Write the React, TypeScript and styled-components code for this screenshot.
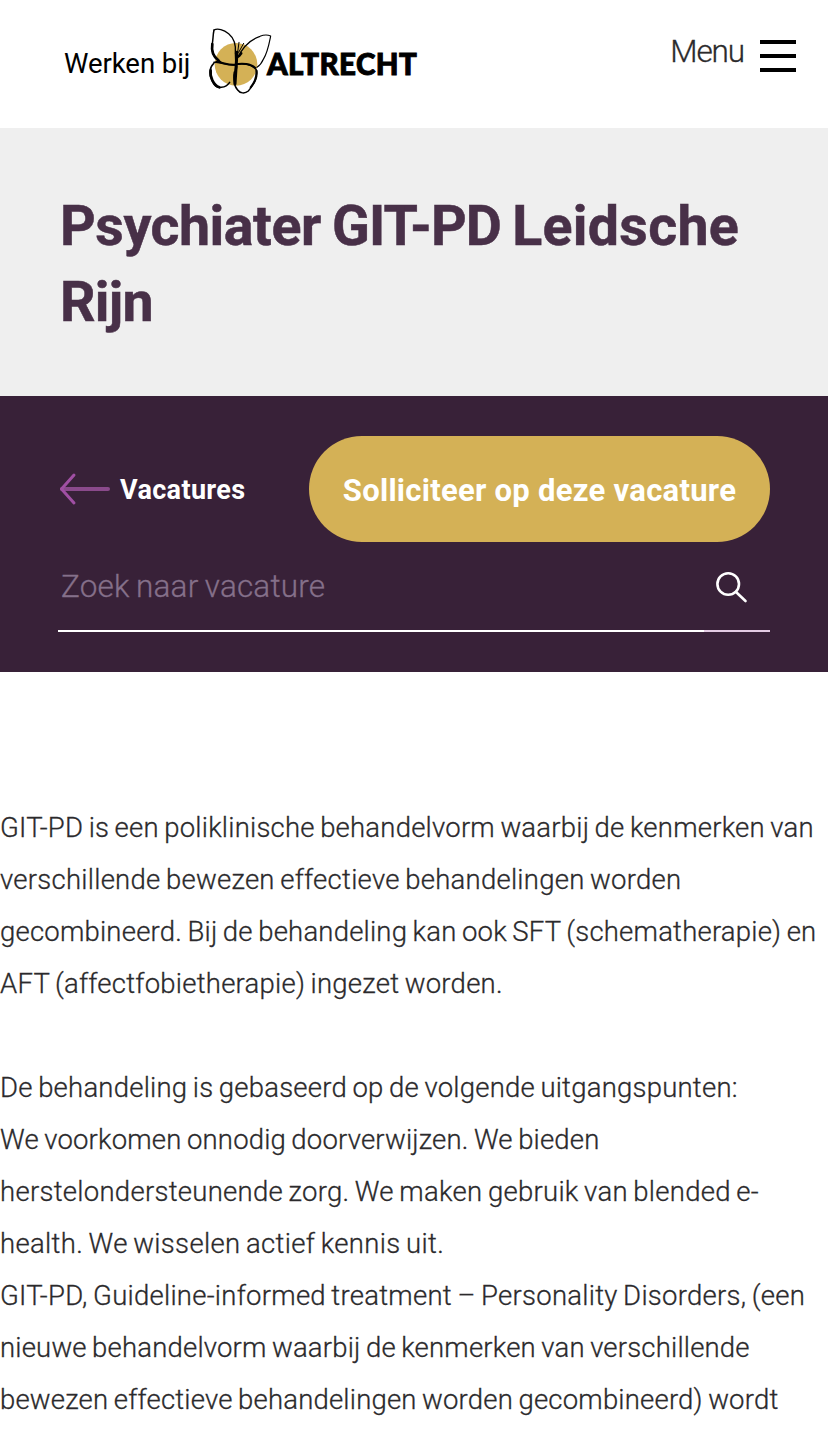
import React from "react";
import styled, { createGlobalStyle } from "styled-components";

const GlobalStyle = createGlobalStyle`
  *, *::before, *::after { box-sizing: border-box; }
  html { overflow: hidden; }
  body {
    margin: 0;
    height: 1430px;
    overflow: hidden;
    background: #fff;
    color: #2b2a2c;
    font-family: Roboto, "Liberation Sans", sans-serif;
  }
`;

const Header = styled.header`
  display: flex;
  align-items: flex-start;
  justify-content: space-between;
  height: 128px;
  padding: 0 32px 0 64px;
`;

const Brand = styled.a`
  display: flex;
  align-items: flex-start;
  color: #000;
  text-decoration: none;
`;

const BrandPrefix = styled.span`
  width: 141px;
  padding-top: 47px;
  font-size: 27.5px;
  font-weight: 400;
  line-height: 34px;
  letter-spacing: -0.05px;
  white-space: nowrap;
`;

const Butterfly = styled.svg`
  display: block;
  width: 70px;
  height: 78px;
  margin-top: 22px;
`;

const BrandName = styled.span`
  margin: 47px 0 0 -8px;
  font-family: Lato, sans-serif;
  font-size: 29.5px;
  font-weight: 900;
  line-height: 34px;
  letter-spacing: 0.4px;
  -webkit-text-stroke: 0.9px #000;
`;

const MenuButton = styled.button`
  display: flex;
  align-items: flex-start;
  gap: 16px;
  padding: 0;
  border: 0;
  background: none;
  color: #2b2a2c;
  font-family: inherit;
`;

const MenuLabel = styled.span`
  padding-top: 33px;
  font-size: 31.5px;
  font-weight: 300;
  line-height: 38px;
  letter-spacing: -1.1px;
  -webkit-text-stroke: 0.3px currentColor;
`;

const Bars = styled.span`
  display: flex;
  flex-direction: column;
  justify-content: space-between;
  width: 36px;
  height: 32px;
  margin-top: 40px;
`;

const Bar = styled.span`
  height: 4px;
  background: #000;
`;

const Hero = styled.section`
  height: 268px;
  padding: 61px 60px 0;
  background: #efefef;
`;

const Title = styled.h1`
  margin: 0;
  color: #483048;
  font-size: 55.5px;
  font-weight: 700;
  line-height: 76px;
  word-spacing: -2.6px;
  -webkit-text-stroke: 0.5px currentColor;
`;

const Word = styled.span<{ $track: number }>`
  letter-spacing: ${(p) => p.$track}px;
`;

const ActionBar = styled.section`
  height: 276px;
  padding: 40px 58px 0;
  background: #382138;
`;

const Actions = styled.div`
  display: flex;
  align-items: center;
  justify-content: space-between;
  height: 106px;
`;

const BackLink = styled.a`
  display: flex;
  align-items: center;
  gap: 9px;
  color: #fff;
  font-size: 27px;
  font-weight: 700;
  line-height: 36px;
  letter-spacing: 0.35px;
`;

const BackLabel = styled.span`
  padding-top: 2px;
`;

const ApplyButton = styled.button`
  width: 461px;
  height: 106px;
  padding: 2px 0 0;
  border: 0;
  border-radius: 53px;
  background: #d4b156;
  color: #fff;
  font-family: inherit;
  font-size: 31px;
  font-weight: 700;
  letter-spacing: 0.27px;
  white-space: nowrap;
`;

const SearchForm = styled.form`
  display: flex;
  height: 90px;
`;

const SearchInput = styled.input`
  width: 646px;
  height: 90px;
  padding: 1px 3px 0;
  border: 0;
  border-bottom: 2px solid #fff;
  outline: 0;
  background: none;
  color: #fff;
  font-family: inherit;
  font-size: 31.5px;
  font-weight: 300;
  letter-spacing: 0.18px;
  word-spacing: -1.5px;
  &::placeholder {
    color: #85708a;
    opacity: 1;
    -webkit-text-stroke: 0.3px #85708a;
  }
`;

const SearchButton = styled.button`
  flex: 1;
  display: flex;
  padding: 29px 0 0 11px;
  border: 0;
  border-bottom: 2px solid #e3cbe3;
  background: none;
`;

const Article = styled.main`
  padding-top: 130px;
`;

const Paragraph = styled.p`
  margin: 0 0 52px;
  font-size: 27.5px;
  font-weight: 300;
  line-height: 52px;
  word-spacing: -1.5px;
  -webkit-text-stroke: 0.3px currentColor;
`;

const Line = styled.span<{ $track?: number }>`
  display: block;
  white-space: nowrap;
  letter-spacing: ${(p) => p.$track ?? 0}px;
`;

const intro: [string, number][] = [
  ["GIT-PD is een poliklinische behandelvorm waarbij de kenmerken van", 0.22],
  ["verschillende bewezen effectieve behandelingen worden", 0.26],
  ["gecombineerd. Bij de behandeling kan ook SFT (schematherapie) en", 0.21],
  ["AFT (affectfobietherapie) ingezet worden.", 0.24],
];

const principles: [string, number][] = [
  ["De behandeling is gebaseerd op de volgende uitgangspunten:", 0.23],
  ["We voorkomen onnodig doorverwijzen. We bieden", 0.18],
  ["herstelondersteunende zorg. We maken gebruik van blended e-", 0.28],
  ["health. We wisselen actief kennis uit.", 0.33],
  ["GIT-PD, Guideline-informed treatment – Personality Disorders, (een", 0.26],
  ["nieuwe behandelvorm waarbij de kenmerken van verschillende", 0.19],
  ["bewezen effectieve behandelingen worden gecombineerd) wordt", 0.2],
];

const TextBlock = ({ lines }: { lines: [string, number][] }) => (
  <Paragraph>
    {lines.map(([text, track]) => (
      <Line key={text} $track={track}>{text}</Line>
    ))}
  </Paragraph>
);

export default function App() {
  return (
    <>
      <GlobalStyle />
      <Header>
        <Brand>
          <BrandPrefix>Werken bij</BrandPrefix>
          <Butterfly viewBox="0 0 210 234" aria-hidden="true">
            <circle cx="93" cy="127" r="64" fill="#d4b156" />
            <g fill="none" stroke="#000" strokeLinecap="round" strokeLinejoin="round">
              <path d="M27 24C38 18 56 23 71 35C88 49 93 71 91 93L92 119" strokeWidth="4" />
              <path d="M27 24C23 42 25 54 21 69C18 93 31 111 47 120" strokeWidth="4.5" />
              <path d="M22 66C18 91 28 106 40 115" strokeWidth="8" />
              <path d="M94 115C108 82 133 54 165 43C177 38 188 38 197 42C193 62 188 91 175 112C170 124 164 131 156 136" strokeWidth="3.5" />
              <path d="M27 121C50 120 69 132 91 128C114 121 143 127 155 145C160 171 143 190 130 207C119 216 105 214 98 204C86 192 85 167 88 150" strokeWidth="4.5" />
              <path d="M34 120C53 120 68 130 89 128C112 122 138 126 150 137" strokeWidth="6" />
              <path d="M27 123C11 139 13 161 24 181C34 206 64 196 74 181" strokeWidth="4.5" />
              <path d="M17 145C14 164 25 189 43 196" strokeWidth="8" />
              <path d="M96 91L90 186" strokeWidth="9" />
              <path d="M93 94C99 110 103 103 109 94M94 134L90 160" strokeWidth="7" />
              <path d="M98 91L102 61M101 91L116 64" strokeWidth="3" />
              <path d="M154 146C156 169 147 184 137 196" strokeWidth="6" />
            </g>
          </Butterfly>
          <BrandName>ALTRECHT</BrandName>
        </Brand>
        <MenuButton>
          <MenuLabel>Menu</MenuLabel>
          <Bars><Bar /><Bar /><Bar /></Bars>
        </MenuButton>
      </Header>
      <Hero>
        <Title>
          <Line>
            <Word $track={-0.45}>Psychiater</Word> <Word $track={-0.9}>GIT-PD</Word>{" "}
            <Word $track={0.3}>Leidsche</Word>
          </Line>
          <Line $track={-0.7}>Rijn</Line>
        </Title>
      </Hero>
      <ActionBar>
        <Actions>
          <BackLink>
            <svg width="53" height="34" viewBox="0 0 53 34" fill="none" strokeLinecap="round" strokeLinejoin="round" aria-hidden="true">
              <path d="M4 17H50" stroke="#8a4a8b" strokeWidth="4" />
              <path d="M16 3L3.5 17L16 31" stroke="#a04fa3" strokeWidth="3" />
            </svg>
            <BackLabel>Vacatures</BackLabel>
          </BackLink>
          <ApplyButton>Solliciteer op deze vacature</ApplyButton>
        </Actions>
        <SearchForm>
          <SearchInput placeholder="Zoek naar vacature" />
          <SearchButton type="button" aria-label="Zoek">
            <svg width="34" height="34" viewBox="0 0 34 34" fill="none" stroke="#fff" strokeWidth="2.6" strokeLinecap="round">
              <circle cx="13.2" cy="13" r="10.8" />
              <path d="M21 21L30.5 30" />
            </svg>
          </SearchButton>
        </SearchForm>
      </ActionBar>
      <Article>
        <TextBlock lines={intro} />
        <TextBlock lines={principles} />
      </Article>
    </>
  );
}
